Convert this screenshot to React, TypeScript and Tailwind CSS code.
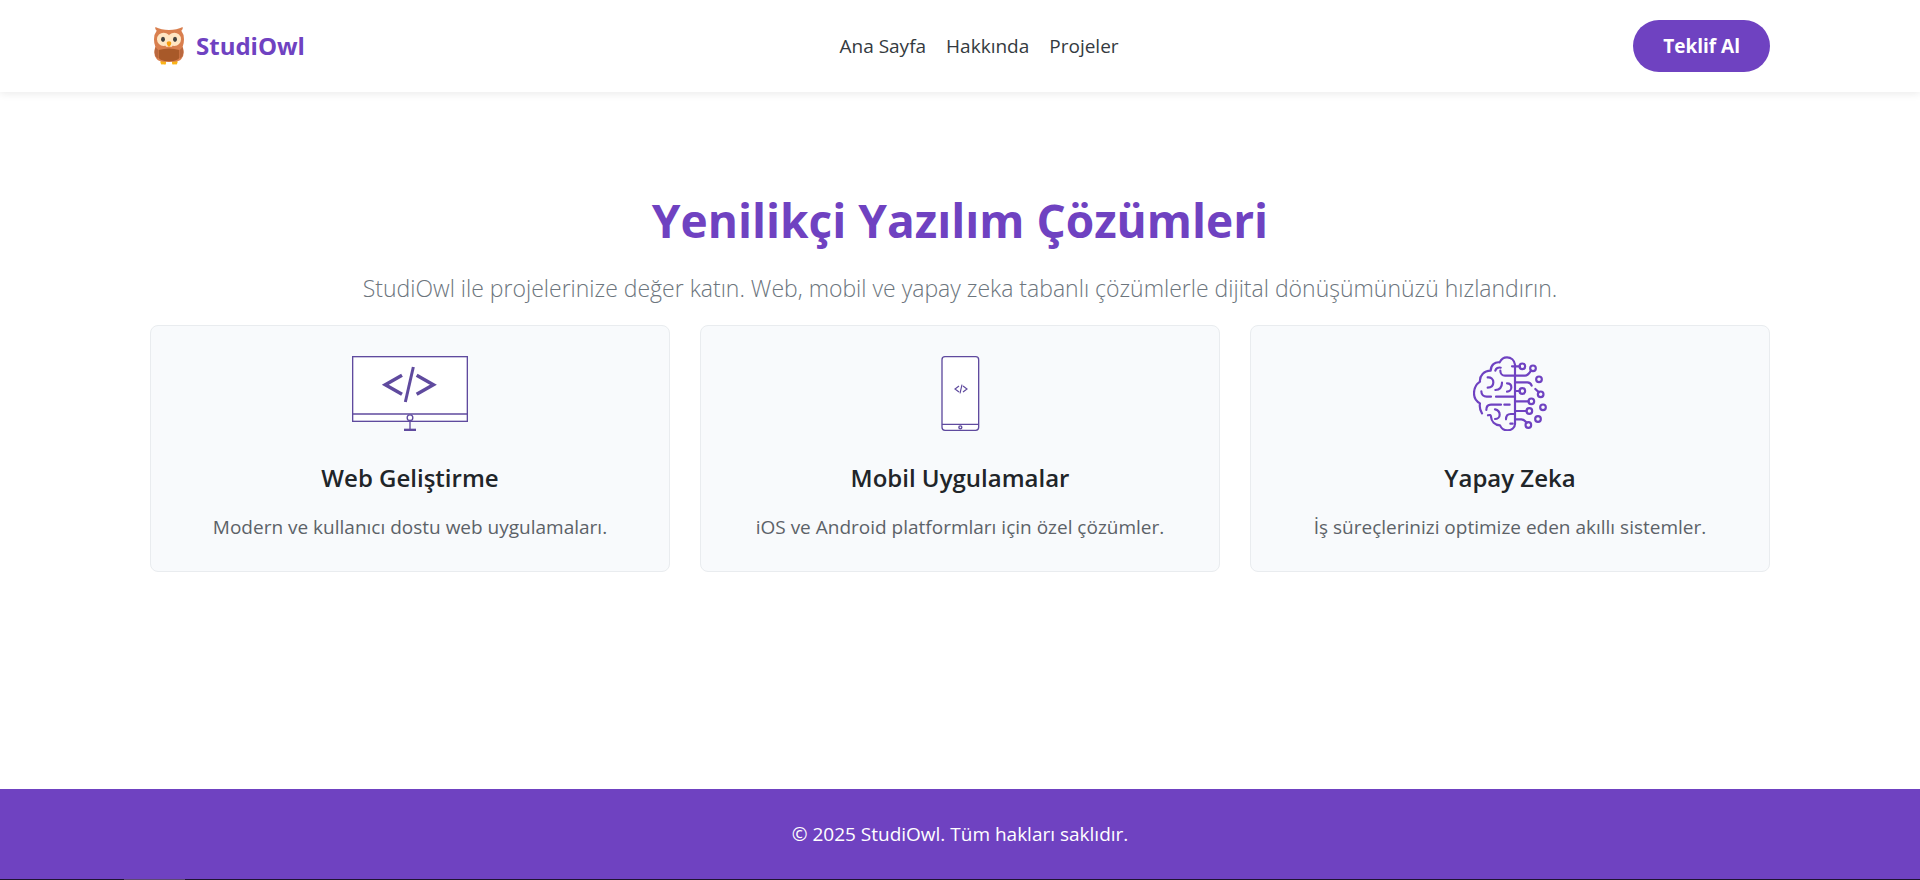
import type { ReactNode } from "react";

function OwlLogo() {
  return (
    <svg viewBox="0 0 90 114" className="h-[38px] w-[30px]" aria-hidden="true">
      <g fill="#fbb417">
        <path d="M20 102h16v7q0 4-3 4t-3-2q-2 3-4 1-4 2-5-2-3-1-1-8z" />
        <path d="M54 102h16q2 7-1 8-1 4-5 2-2 2-4-1-1 2-3 2t-3-4z" />
      </g>
      <path d="M4 0Q22 9 45 9T86 0q2 6-4 11 8 10 8 26 0 14-4 22 3 8 3 18 0 12-7 19-4 9-37 9T8 96Q1 89 1 77q0-10 3-18Q0 51 0 37 0 21 8 11 2 6 4 0z" fill="#d97f4e" />
      <path d="M4 61q-4 13 0 26l8 8V68zM86 61q4 13 0 26l-8 8V68z" fill="#b9683f" />
      <path d="M14 69q31-9 62 0v22q-1 11-31 12-30-1-31-12z" fill="#a85929" />
      <circle cx="29" cy="37" r="20" fill="#ffe6c3" />
      <circle cx="61" cy="37" r="20" fill="#ffe6c3" />
      <path d="M30 45h30l-6 14H36z" fill="#ffe6c3" />
      <ellipse cx="27" cy="37" rx="6" ry="8" fill="#43423f" />
      <ellipse cx="63" cy="37" rx="6" ry="8" fill="#43423f" />
      <path d="M38 48q0-5 7-5t7 5q0 6-7 12-7-6-7-12z" fill="#f89f0c" />
    </svg>
  );
}

function MonitorIcon() {
  return (
    <svg viewBox="36 33 348 225" className="h-[75px] w-[116px]" fill="none" stroke="#5f4a9e" aria-hidden="true">
      <rect x="38" y="35" width="344" height="194" fill="#fff" strokeWidth="4" />
      <path d="M38 207h344" strokeWidth="5" />
      <path d="M210 228v24" strokeWidth="4" />
      <path d="M192 254.500h36" strokeWidth="7" />
      <circle cx="210" cy="218" r="8.500" fill="#fff" strokeWidth="4" />
      <path d="M186 91l-50 28.500 50 28.500M230 91l50 28.500-50 28.500" strokeWidth="10.500" />
      <path d="M220 66l-24 105" strokeWidth="9" />
    </svg>
  );
}

function PhoneIcon() {
  return (
    <svg viewBox="8 33 225 225" className="size-[75px]" fill="none" stroke="#5f4a9e" aria-hidden="true">
      <rect x="65" y="35" width="110" height="221" rx="9" fill="#fff" strokeWidth="4" />
      <path d="M65 238h110" strokeWidth="4" />
      <circle cx="120" cy="247" r="4.500" strokeWidth="4" />
      <path d="M116 123l-12 9 12 9M128 123l12 9-12 9M125 119l-6 26" strokeWidth="3.500" />
    </svg>
  );
}

function BrainIcon() {
  const nodes = [
    [186, 63], [218, 69], [236, 102], [186, 137], [241, 147], [213, 168],
    [248, 186], [207, 197], [233, 221], [204, 239],
  ];
  return (
    <svg viewBox="38 32 225 225" className="size-[75px]" fill="none" stroke="#6f42c1" strokeWidth="6.500" strokeLinecap="round" strokeLinejoin="round" aria-hidden="true">
      <path d="M164 236V58c-2-14-12-22-24-22-10 0-18 6-22 15-14-2-27 8-27 25-20 0-34 15-32 33-12 8-18 20-18 35 0 13 7 24 18 30-2 11 0 21 6 30" />
      <path d="M83 210c5-2 9-1 9 4 1 14 11 25 27 26 4 9 12 15 22 15 13 0 23-8 23-20" />
      <path d="M105 76c2-7 9-11 16-9M120 76c0 9 6 15 14 15h60c8 0 13-7 18-15M155 63h24M82 96c10-1 17 5 17 15s-7 16-17 16M125 112c0 13-8 21-20 22M140 114c8 0 13 5 13 12s-5 13-13 13M63 138c0 10 7 16 16 16h13M107 154h57M78 194c0-10 5-16 14-16h30M132 178h16M104 192c9 2 14 9 14 16s-6 13-14 13M137 222c0-10 5-16 14-16h13" />
      <path d="M168 111h33c7 0 11 4 13 10M168 137h11M168 168h37M168 197h31M168 222h15c8 0 12 5 16 10M225 131l11 10M150 235h7" />
      {nodes.map(([x, y]) => (
        <circle key={`${x}-${y}`} cx={x} cy={y} r="8.500" />
      ))}
    </svg>
  );
}

function ServiceCard({ icon, title, text }: { icon: ReactNode; title: string; text: string }) {
  return (
    <article className="flex flex-col items-center rounded-lg border border-[#e9ecef] bg-[#f8fafc] p-[30px] text-center">
      {icon}
      <h2 className="mt-7 text-[24px] leading-[38px] font-semibold text-[#212529]">{title}</h2>
      <p className="mt-4 text-[19px] leading-7 text-[#5c6268]">{text}</p>
    </article>
  );
}

const links = ["Ana Sayfa", "Hakkında", "Projeler"];

export default function App() {
  return (
    <div className="flex min-h-screen flex-col bg-white font-['Open_Sans','Noto_Sans',sans-serif]">
      <header className="bg-white px-6 py-5 shadow-[0_2px_8px_rgba(0,0,0,0.08)]">
        <div className="mx-auto flex max-w-[1620px] items-center justify-between">
          <a href="#" className="flex items-center gap-3 pl-1 text-[24px] font-bold text-[#6f42c1]">
            <OwlLogo />
            StudiOwl
          </a>
          <nav className="flex gap-5 pl-5 text-[19px] text-[#343a40]">
            {links.map((label) => (
              <a key={label} href="#">{label}</a>
            ))}
          </nav>
          <button type="button" className="h-[52px] rounded-full bg-[#6f42c1] px-[30px] text-[19px] font-bold text-white">
            Teklif Al
          </button>
        </div>
      </header>
      <main className="flex-1 px-6 py-24">
        <section className="mx-auto max-w-[1620px] text-center">
          <h1 className="text-[46px] leading-[64px] font-bold text-[#6f42c1]">Yenilikçi Yazılım Çözümleri</h1>
          <p className="mt-4 text-[23px] leading-10 font-light text-[#6c757d]">
            StudiOwl ile projelerinize değer katın. Web, mobil ve yapay zeka tabanlı çözümlerle dijital dönüşümünüzü hızlandırın.
          </p>
          <div className="mt-[17px] grid grid-cols-3 gap-[30px]">
            <ServiceCard icon={<MonitorIcon />} title="Web Geliştirme" text="Modern ve kullanıcı dostu web uygulamaları." />
            <ServiceCard icon={<PhoneIcon />} title="Mobil Uygulamalar" text="iOS ve Android platformları için özel çözümler." />
            <ServiceCard icon={<BrainIcon />} title="Yapay Zeka" text="İş süreçlerinizi optimize eden akıllı sistemler." />
          </div>
        </section>
      </main>
      <footer className="bg-[#6f42c1] text-center text-[19px] leading-[30px] text-white">
        <p className="px-6 py-[30px]">© 2025 StudiOwl. Tüm hakları saklıdır.</p>
        <div className="h-px bg-[#1f1430] pl-[124px]">
          <div className="h-px w-[61px] bg-[#5d4a70]" />
        </div>
      </footer>
    </div>
  );
}
